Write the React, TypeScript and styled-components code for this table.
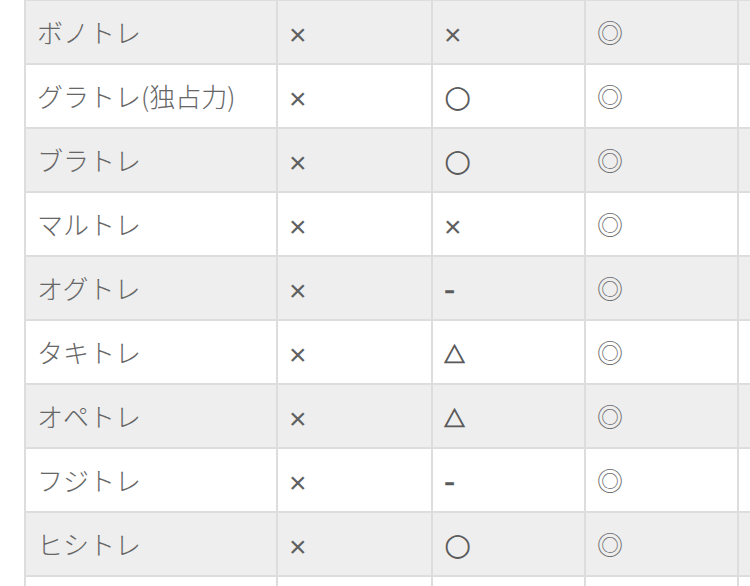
import React from "react";
import styled, { createGlobalStyle } from "styled-components";

const GlobalStyle = createGlobalStyle`
  html, body {
    margin: 0;
    padding: 0;
    background: #ffffff;
    overflow: hidden;
  }
  body {
    font-family: "Noto Sans CJK JP", "Liberation Sans", sans-serif;
  }
`;

const Page = styled.div`
  padding-left: 24px;
  width: 750px;
  height: 586px;
  box-sizing: border-box;
  overflow: hidden;
`;

const Table = styled.div`
  display: flex;
  flex-direction: column;
  gap: 2px;
  padding: 1px 0 0 2px;
  background: #dddddd;
  width: max-content;
`;

const Row = styled.div<{ $shade: boolean }>`
  display: flex;
  gap: 2px;
  background: #dddddd;
  & > * {
    background: ${(p) => (p.$shade ? "#eeeeee" : "#ffffff")};
  }
`;

const Cell = styled.div<{ $w: number }>`
  width: ${(p) => p.$w}px;
  height: 62px;
  box-sizing: border-box;
  padding-left: 11px;
  display: flex;
  align-items: center;
  font-size: 26px;
  font-weight: 300;
  line-height: 1;
  color: #666666;
  white-space: nowrap;
`;

type Mark = "x" | "o" | "oo" | "tri" | "dash";

const MarkText = styled.span<{ $kind: Mark }>`
  display: inline-block;
  color: #5a5a5a;
  font-weight: 400;
  ${(p) =>
    p.$kind === "x"
      ? `font-family: "Liberation Sans", sans-serif; font-size: 30px; margin-top: 5px; color: #606060;`
      : p.$kind === "o"
      ? `font-family: "DejaVu Sans", sans-serif; font-size: 31px; margin-top: 0px;`
      : p.$kind === "oo"
      ? `font-family: "Noto Sans CJK JP", sans-serif; font-size: 26px; color: #6a6a6a; font-weight: 300;`
      : p.$kind === "tri"
      ? `font-family: "Noto Sans CJK JP", sans-serif; font-size: 21px; margin-top: 3px; -webkit-text-stroke: 0.9px #5a5a5a;`
      : `font-family: "DejaVu Sans", sans-serif; font-size: 31px; margin-top: 3px; -webkit-text-stroke: 0.5px #5a5a5a;`}
`;

const glyph: Record<Mark, string> = {
  x: "×",
  o: "○",
  oo: "◎",
  tri: "△",
  dash: "-",
};

const widths = [250, 153, 151, 151, 200];

const rows: { name: string; a?: Mark; b?: Mark; c?: Mark }[] = [
  { name: "ボノトレ", a: "x", b: "x", c: "oo" },
  { name: "グラトレ(独占力)", a: "x", b: "o", c: "oo" },
  { name: "ブラトレ", a: "x", b: "o", c: "oo" },
  { name: "マルトレ", a: "x", b: "x", c: "oo" },
  { name: "オグトレ", a: "x", b: "dash", c: "oo" },
  { name: "タキトレ", a: "x", b: "tri", c: "oo" },
  { name: "オペトレ", a: "x", b: "tri", c: "oo" },
  { name: "フジトレ", a: "x", b: "dash", c: "oo" },
  { name: "ヒシトレ", a: "x", b: "o", c: "oo" },
  { name: "" },
];

function MarkCell({ w, kind }: { w: number; kind?: Mark }) {
  return (
    <Cell $w={w}>{kind ? <MarkText $kind={kind}>{glyph[kind]}</MarkText> : null}</Cell>
  );
}

export default function App() {
  return (
    <>
      <GlobalStyle />
      <Page>
        <Table>
          {rows.map((r, i) => (
            <Row key={i} $shade={i % 2 === 0}>
              <Cell $w={widths[0]}>{r.name}</Cell>
              <MarkCell w={widths[1]} kind={r.a} />
              <MarkCell w={widths[2]} kind={r.b} />
              <MarkCell w={widths[3]} kind={r.c} />
              <Cell $w={widths[4]} />
            </Row>
          ))}
        </Table>
      </Page>
    </>
  );
}
